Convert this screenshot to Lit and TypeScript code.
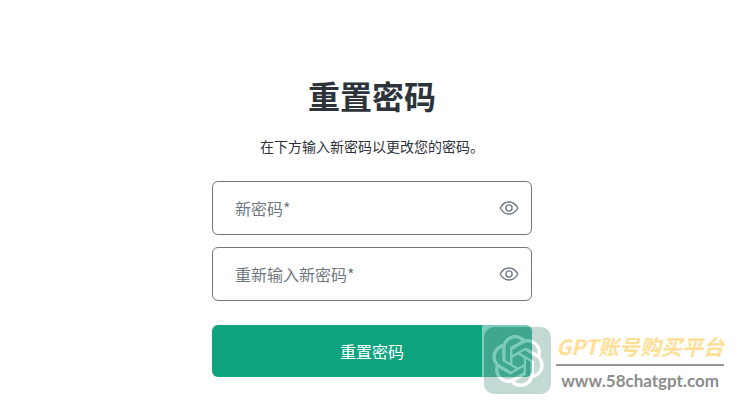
import { LitElement, html, css, svg } from "lit";
import { customElement, property, state } from "lit/decorators.js";

const eye = svg`<svg viewBox="0 0 20 16" width="20" height="16" fill="none" stroke="currentColor" stroke-width="1.3" aria-hidden="true">
  <path d="M1.2 8C3.2 4.2 6.3 2 10 2s6.800 2.200 8.800 6c-2 3.800-5.100 6-8.800 6S3.200 11.800 1.200 8Z" stroke-linejoin="round"/>
  <circle cx="10" cy="8" r="3.100"/>
</svg>`;

@customElement("password-field")
export class PasswordField extends LitElement {
  @property() label = "";
  @property() name = "";
  @state() private shown = false;

  static styles = css`
    :host { display: block; }
    .box {
      display: flex;
      align-items: center;
      box-sizing: border-box;
      height: 54px;
      padding: 0 12px 0 22px;
      border: 1px solid #6f7780;
      border-radius: 6px;
      background: #fff;
    }
    .box:focus-within { border-color: #10a37f; }
    .input {
      flex: 1;
      min-width: 0;
      padding: 0;
      border: 0;
      outline: 0;
      background: none;
      font: inherit;
      line-height: 24px;
      color: #2d333a;
    }
    .input::placeholder { color: #6f7780; opacity: 1; }
    .toggle {
      display: flex;
      padding: 0;
      border: 0;
      background: none;
      color: #6f7780;
      cursor: pointer;
    }
  `;

  render() {
    return html`<div class="box">
      <input class="input" name=${this.name} type=${this.shown ? "text" : "password"}
        placeholder=${this.label} aria-label=${this.label} autocomplete="new-password" />
      <button class="toggle" type="button" aria-label="显示密码" aria-pressed=${this.shown}
        @click=${() => (this.shown = !this.shown)}>${eye}</button>
    </div>`;
  }
}

@customElement("site-mark")
export class SiteMark extends LitElement {
  static styles = css`
    :host { display: flex; align-items: center; gap: 3px; pointer-events: none; }
    .frame {
      padding: 2px;
      background: #fff;
      opacity: 0.45;
    }
    .tile {
      display: flex;
      align-items: center;
      justify-content: center;
      width: 67px;
      height: 67px;
      border-radius: 10px;
      background: #7aada2;
      color: #fff;
    }
    .text { padding-top: 4px; }
    .name {
      font-size: 21px;
      line-height: 28px;
      font-weight: 700;
      font-style: italic;
      color: #ffdf96;
      white-space: nowrap;
    }
    .site {
      margin-top: 4px;
      border-top: 2px solid #999;
      padding-top: 2px;
      font-family: Lato, "Noto Sans", sans-serif;
      font-size: 17px;
      line-height: 26px;
      font-weight: 700;
      text-align: center;
      color: #8c8c8c;
    }
  `;

  render() {
    return html`<div class="frame"><div class="tile">
        <svg class="logo" viewBox="0 0 24 24" width="52" height="52" fill="currentColor" aria-hidden="true">
          <path d="M22.2819 9.8211a5.9847 5.9847 0 0 0-.5157-4.9108 6.0462 6.0462 0 0 0-6.5098-2.9A6.0651 6.0651 0 0 0 4.9807 4.1818a5.9847 5.9847 0 0 0-3.9977 2.9 6.0462 6.0462 0 0 0 .7427 7.0966 5.98 5.98 0 0 0 .511 4.9107 6.051 6.051 0 0 0 6.5146 2.9001A5.9847 5.9847 0 0 0 13.2599 24a6.0557 6.0557 0 0 0 5.7718-4.2058 5.9894 5.9894 0 0 0 3.9977-2.9001 6.0557 6.0557 0 0 0-.7475-7.0729zm-9.022 12.6081a4.4755 4.4755 0 0 1-2.8764-1.0408l.1419-.0804 4.7783-2.7582a.7948.7948 0 0 0 .3927-.6813v-6.7369l2.02 1.1686a.071.071 0 0 1 .038.052v5.5826a4.504 4.504 0 0 1-4.4945 4.4944zm-9.6607-4.1254a4.4708 4.4708 0 0 1-.5346-3.0137l.142.0852 4.783 2.7582a.7712.7712 0 0 0 .7806 0l5.8428-3.3685v2.3324a.0804.0804 0 0 1-.0332.0615L9.74 19.9502a4.4992 4.4992 0 0 1-6.1408-1.6464zM2.3408 7.8956a4.485 4.485 0 0 1 2.3655-1.9728V11.6a.7664.7664 0 0 0 .3879.6765l5.8144 3.3543-2.0201 1.1685a.0757.0757 0 0 1-.071 0l-4.8303-2.7865A4.504 4.504 0 0 1 2.3408 7.872zm16.5963 3.8558L13.1038 8.364 15.1192 7.2a.0757.0757 0 0 1 .071 0l4.8303 2.7913a4.4944 4.4944 0 0 1-.6765 8.1042v-5.6772a.79.79 0 0 0-.407-.667zm2.0107-3.0231l-.142-.0852-4.7735-2.7818a.7759.7759 0 0 0-.7854 0L9.409 9.2297V6.8974a.0662.0662 0 0 1 .0284-.0615l4.8303-2.7866a4.4992 4.4992 0 0 1 6.6802 4.66zM8.3065 12.863l-2.02-1.1638a.0804.0804 0 0 1-.038-.0567V6.0742a4.4992 4.4992 0 0 1 7.3757-3.4537l-.142.0805L8.704 5.459a.7948.7948 0 0 0-.3927.6813zm1.0976-2.3654l2.602-1.4998 2.6069 1.4998v2.9994l-2.5974 1.4997-2.6067-1.4997Z"/>
        </svg>
      </div></div>
      <div class="text">
        <div class="name">GPT账号购买平台</div>
        <div class="site">www.58chatgpt.com</div>
      </div>`;
  }
}

@customElement("app-root")
export class AppRoot extends LitElement {
  static styles = css`
    :host {
      display: block;
      position: relative;
      box-sizing: border-box;
      min-height: 100vh;
      padding: 75px 16px 23px 23px;
      background: #fff;
      color: #2d333a;
      font-family: "Noto Sans CJK SC", "Noto Sans", sans-serif;
      font-size: 16px;
    }
    .panel { max-width: 320px; margin: 0 auto; }
    .title {
      margin: 0;
      font-size: 32px;
      line-height: 40px;
      font-weight: 700;
      text-align: center;
    }
    .lead {
      margin: 20px 0 24px;
      font-size: 14px;
      line-height: 22px;
      text-align: center;
    }
    .form { display: flex; flex-direction: column; gap: 12px; }
    .submit {
      height: 52px;
      margin-top: 12px;
      border: 0;
      border-radius: 6px;
      background: #10a37f;
      color: #fff;
      font: inherit;
      cursor: pointer;
    }
    .mark { position: absolute; right: 13px; bottom: 4px; }
  `;

  render() {
    return html`<main class="panel">
        <h1 class="title">重置密码</h1>
        <p class="lead">在下方输入新密码以更改您的密码。</p>
        <form class="form" @submit=${(e: Event) => e.preventDefault()}>
          <password-field name="password" label="新密码*"></password-field>
          <password-field name="confirm" label="重新输入新密码*"></password-field>
          <button class="submit" type="submit">重置密码</button>
        </form>
      </main>
      <site-mark class="mark"></site-mark>`;
  }
}
